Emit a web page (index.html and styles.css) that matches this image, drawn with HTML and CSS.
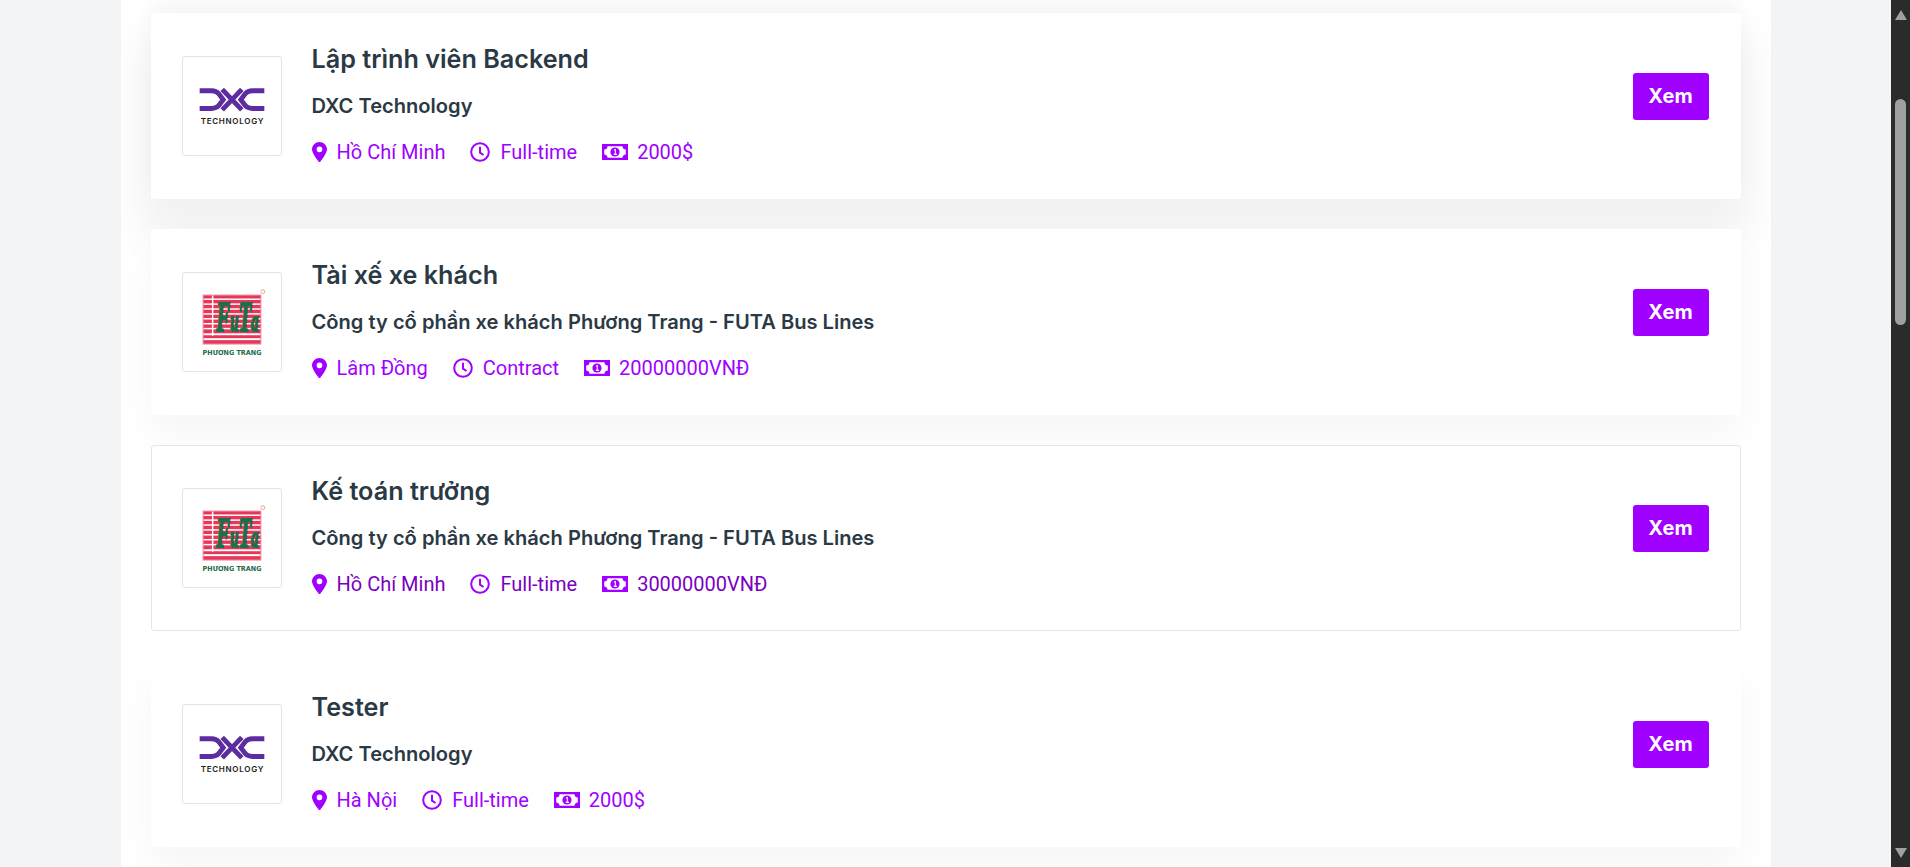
FILE: index.html
```html
<!DOCTYPE html>
<html lang="vi">

<head>
   <meta charset="utf-8">
   <title>Việc làm</title>
   <link rel="stylesheet" href="styles.css">
</head>

<body>
   <svg class="defs" width="0" height="0" aria-hidden="true">
      <symbol id="logo-dxc" viewBox="0 0 100 100">
         <g fill="none" stroke="#5c2d9e" stroke-width="5">
            <path d="M17 34.500H29Q34 34.500 36.500 37.500L41 43.500L36.500 49.500Q34 52.500 29 52.500H17" />
            <path d="M40 33L60 54M60 33L40 54" />
            <path d="M83 34.500H71Q66 34.500 63.500 37.500L59 43.500L63.500 49.500Q66 52.500 71 52.500H83" />
         </g>
         <text class="logo-dxc-text" x="18" y="68" textLength="64">TECHNOLOGY</text>
      </symbol>
      <symbol id="logo-futa" viewBox="0 0 100 100">
         <rect x="20.500" y="22.500" width="59" height="50" fill="#e8365a" stroke="#ef8ea2" />
         <g fill="#fff">
            <rect x="21" y="26" width="58" height="1.500" />
            <rect x="21" y="31" width="58" height="1.500" />
            <rect x="21" y="36" width="58" height="1.500" />
            <rect x="21" y="41" width="58" height="1.500" />
            <rect x="21" y="46" width="58" height="1.500" />
            <rect x="21" y="51" width="58" height="1.500" />
            <rect x="21" y="56" width="58" height="1.500" />
            <rect x="21" y="61.500" width="58" height="2" />
            <rect x="21" y="66.500" width="58" height="2" />
            <rect x="29.500" y="23" width="1.500" height="41" />
         </g>
         <text class="logo-futa-name" x="34" y="59" textLength="43" lengthAdjust="spacingAndGlyphs">F<tspan class="logo-futa-small">u</tspan>T<tspan class="logo-futa-small">a</tspan></text>
         <text class="logo-futa-sub" x="20" y="83.500" textLength="60" lengthAdjust="spacingAndGlyphs">PHƯƠNG TRANG</text>
         <circle cx="81.500" cy="19" r="2" fill="none" stroke="#e88" stroke-width=".8" />
      </symbol>
      <symbol id="icon-pin" viewBox="0 0 15 20">
         <path fill-rule="evenodd" fill="currentColor" d="M7.500 0C3.400 0 0 3.300 0 7.400C0 10.600 4.600 16.800 6.500 19.400C7 20.100 8 20.100 8.500 19.400C10.400 16.800 15 10.600 15 7.400C15 3.300 11.600 0 7.500 0ZM7.500 10.200A2.800 2.800 0 1 1 7.500 4.600A2.800 2.800 0 0 1 7.500 10.200Z" />
      </symbol>
      <symbol id="icon-clock" viewBox="0 0 20 20">
         <circle cx="10" cy="10" r="8.800" fill="none" stroke="currentColor" stroke-width="2" />
         <path d="M10 4.800V10.600L13.600 13" fill="none" stroke="currentColor" stroke-width="2" />
      </symbol>
      <symbol id="icon-money" viewBox="0 0 26 16">
         <path fill-rule="evenodd" fill="currentColor" d="M0 0H26V16H0ZM2.200 2.200V13.800H23.800V2.200Z" />
         <path fill="currentColor" d="M2 2H5.500Q5.500 5.500 2 5.500ZM24 2H20.500Q20.500 5.500 24 5.500ZM2 14H5.500Q5.500 10.500 2 10.500ZM24 14H20.500Q20.500 10.500 24 10.500Z" />
         <circle cx="13" cy="8" r="4.600" fill="currentColor" />
         <path d="M12 6.200L13.300 5.600V10.400M11.700 10.400H15" fill="none" stroke="#fff" stroke-width="1.100" />
      </symbol>
   </svg>

   <div class="page">
      <main class="panel">

         <article class="card card-raised">
            <div class="card-logo"><svg width="98" height="98"><use href="#logo-dxc" /></svg></div>
            <div class="card-body">
               <h2 class="card-title">Lập trình viên Backend</h2>
               <p class="card-company">DXC Technology</p>
               <ul class="card-meta">
                  <li><svg class="icon-pin"><use href="#icon-pin" /></svg><span>Hồ Chí Minh</span></li>
                  <li><svg class="icon-clock"><use href="#icon-clock" /></svg><span>Full-time</span></li>
                  <li><svg class="icon-money"><use href="#icon-money" /></svg><span>2000$</span></li>
               </ul>
            </div>
            <a class="btn-view" href="#">Xem</a>
         </article>

         <article class="card">
            <div class="card-logo"><svg width="98" height="98"><use href="#logo-futa" /></svg></div>
            <div class="card-body">
               <h2 class="card-title">Tài xế xe khách</h2>
               <p class="card-company">Công ty cổ phần xe khách Phương Trang - FUTA Bus Lines</p>
               <ul class="card-meta">
                  <li><svg class="icon-pin"><use href="#icon-pin" /></svg><span>Lâm Đồng</span></li>
                  <li><svg class="icon-clock"><use href="#icon-clock" /></svg><span>Contract</span></li>
                  <li><svg class="icon-money"><use href="#icon-money" /></svg><span>20000000VNĐ</span></li>
               </ul>
            </div>
            <a class="btn-view" href="#">Xem</a>
         </article>

         <article class="card card-flat">
            <div class="card-logo"><svg width="98" height="98"><use href="#logo-futa" /></svg></div>
            <div class="card-body">
               <h2 class="card-title">Kế toán trưởng</h2>
               <p class="card-company">Công ty cổ phần xe khách Phương Trang - FUTA Bus Lines</p>
               <ul class="card-meta">
                  <li><svg class="icon-pin"><use href="#icon-pin" /></svg><span>Hồ Chí Minh</span></li>
                  <li><svg class="icon-clock"><use href="#icon-clock" /></svg><span>Full-time</span></li>
                  <li><svg class="icon-money"><use href="#icon-money" /></svg><span>30000000VNĐ</span></li>
               </ul>
            </div>
            <a class="btn-view" href="#">Xem</a>
         </article>

         <article class="card">
            <div class="card-logo"><svg width="98" height="98"><use href="#logo-dxc" /></svg></div>
            <div class="card-body">
               <h2 class="card-title">Tester</h2>
               <p class="card-company">DXC Technology</p>
               <ul class="card-meta">
                  <li><svg class="icon-pin"><use href="#icon-pin" /></svg><span>Hà Nội</span></li>
                  <li><svg class="icon-clock"><use href="#icon-clock" /></svg><span>Full-time</span></li>
                  <li><svg class="icon-money"><use href="#icon-money" /></svg><span>2000$</span></li>
               </ul>
            </div>
            <a class="btn-view" href="#">Xem</a>
         </article>

      </main>
   </div>

   <aside class="scrollbar" aria-hidden="true">
      <div class="scroll-up"></div>
      <div class="scroll-thumb"></div>
      <div class="scroll-down"></div>
   </aside>
</body>

</html>
```

FILE: styles.css
```css
html,
body {
   height: 100%;
}

body {
   margin: 0;
   display: flex;
   overflow: hidden;
   background: #f3f4f6;
   font-family: "Inter", sans-serif;
}

.defs {
   display: none;
}

.page {
   flex: 1;
   min-width: 0;
}

.panel {
   width: 1650px;
   height: 867px;
   margin: 0 auto;
   padding: 13px 30px 0;
   box-sizing: border-box;
   overflow: hidden;
   background: #fff;
   display: flex;
   flex-direction: column;
   gap: 30px;
}

.card {
   flex: none;
   height: 186px;
   box-sizing: border-box;
   padding: 0 31px 0 30px;
   display: flex;
   align-items: center;
   background: #fff;
   border: 1px solid transparent;
   border-radius: 3px;
   box-shadow: 0 20px 40px rgba(0, 0, 0, .04);
}

.card-raised {
   box-shadow: 0 30px 40px 10px rgba(0, 0, 0, .055), 0 -13px 20px rgba(0, 0, 0, .035);
}

.card-flat {
   border-color: #e6e6ea;
   box-shadow: none;
}

.card-logo {
   flex: none;
   width: 100px;
   height: 100px;
   box-sizing: border-box;
   border: 1px solid #e2e2ea;
   border-radius: 3px;
   margin-right: 30px;
}

.card-logo svg {
   display: block;
}

.logo-dxc-text {
   font-family: "Inter", sans-serif;
   font-size: 8.200px;
   font-weight: 600;
   fill: #222;
}

.logo-futa-name {
   font-family: "Liberation Serif", serif;
   font-size: 42px;
   font-weight: 700;
   font-style: italic;
   fill: #1c6f46;
   stroke: #1c6f46;
   stroke-width: 2px;
}

.logo-futa-small {
   font-size: 30px;
}

.logo-futa-sub {
   font-family: "DejaVu Sans", sans-serif;
   font-size: 7px;
   font-weight: 700;
   fill: #1f6b45;
}

.card-body {
   flex: 1;
   min-width: 0;
   padding-bottom: 5px;
}

.card-title {
   margin: 0 0 19px;
   font-size: 25.200px;
   line-height: 32px;
   font-weight: 600;
   color: #2b3945;
}

.card-company {
   margin: 0 0 22px;
   font-size: 20.100px;
   line-height: 24px;
   font-weight: 600;
   color: #2b3945;
}

.card-meta {
   margin: 0;
   padding: 0;
   list-style: none;
   display: flex;
   gap: 25px;
   font-family: "Roboto", sans-serif;
   font-size: 20px;
   line-height: 24px;
   color: #a000ff;
}

.card-meta li {
   display: flex;
   align-items: center;
   gap: 10px;
}

.card-meta li:last-child {
   gap: 9px;
}

.card-flat .card-meta span {
   color: #7a00c0;
}

.card-meta svg {
   flex: none;
   display: block;
   color: #a000ff;
}

.icon-pin {
   width: 15px;
   height: 20px;
}

.icon-clock {
   width: 20px;
   height: 20px;
}

.icon-money {
   width: 26px;
   height: 16px;
}

.btn-view {
   flex: none;
   width: 76px;
   height: 47px;
   margin-bottom: 20px;
   display: flex;
   align-items: center;
   justify-content: center;
   background: #a000ff;
   border-radius: 3px;
   color: #fff;
   font-size: 20px;
   font-weight: 700;
   text-decoration: none;
}

.scrollbar {
   flex: none;
   width: 19px;
   height: 867px;
   background: #2b2b2b;
   display: flex;
   flex-direction: column;
   align-items: center;
}

.scroll-up,
.scroll-down {
   width: 0;
   height: 0;
   border-left: 6.500px solid transparent;
   border-right: 6.500px solid transparent;
}

.scroll-up {
   margin-top: 10px;
   border-bottom: 10px solid #a0a0a0;
}

.scroll-thumb {
   width: 11px;
   height: 226px;
   margin-top: 79px;
   background: #a0a0a0;
   border-radius: 6px;
}

.scroll-down {
   margin-top: auto;
   margin-bottom: 9px;
   border-top: 10px solid #a0a0a0;
}
```
